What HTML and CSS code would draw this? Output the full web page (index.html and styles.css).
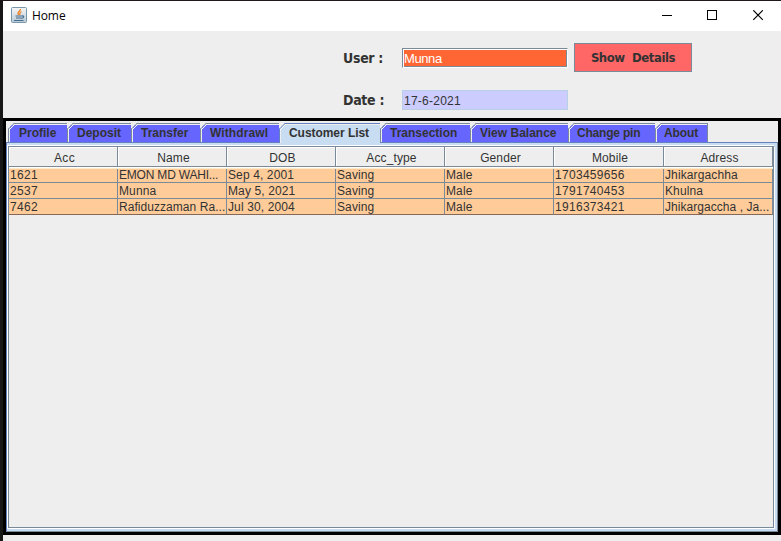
FILE: index.html
```html
<!DOCTYPE html>
<html lang="en">
<head>
<meta charset="utf-8">
<title>Home</title>
<link rel="stylesheet" href="styles.css">
</head>
<body>
<div class="window">
  <header class="titlebar">
    <svg class="java" width="16" height="16" viewBox="0 0 16 16">
      <defs><linearGradient id="g" x2="0" y2="1"><stop stop-color="#f6f7f8"/><stop offset="1" stop-color="#b9c9d5"/></linearGradient></defs>
      <rect x=".5" y=".5" width="15" height="15" rx="1" fill="url(#g)" stroke="#7897ab"/>
      <path d="M9.500 2C10 4 5.500 4.500 7.500 8M10.500 4.500C8 5.500 9.500 6.500 8.500 8" fill="none" stroke="#ee8423" stroke-width="1.300"/>
      <path d="M4.500 9h6.500M5 11h5.500M11 9c2.500-.5 2 2-.5 2.500M3 13.500h9.500" fill="none" stroke="#426d8e" stroke-width="1.200"/>
    </svg>
    <span class="title">Home</span>
    <svg class="controls" width="104" height="12" viewBox="0 0 104 12" fill="none" stroke="#000">
      <path d="M0 5.500h10M45.500 .5h9v9h-9z" shape-rendering="crispEdges"/>
      <path d="M91.300 .300l9.500 9.500M100.800 .300l-9.500 9.500" stroke-width="1.150"/>
    </svg>
  </header>
  <section class="account">
    <label class="label user">User :</label>
    <div class="field name">Munna</div>
    <button class="details">Show&nbsp; Details</button>
    <label class="label date">Date :</label>
    <div class="field day">17-6-2021</div>
  </section>
  <main class="pane">
    <nav class="tabs">
      <div class="tab profile"><svg class="corner" width="7" height="7"><path class="back" d="M0 0h6L0 6z"/><path class="edge" d="M0 6.500L6.500 0"/><path class="shine" d="M1 7L7 1"/></svg><span>Profile</span></div>
      <div class="tab deposit"><svg class="corner" width="7" height="7"><path class="back" d="M0 0h6L0 6z"/><path class="edge" d="M0 6.500L6.500 0"/><path class="shine" d="M1 7L7 1"/></svg><span>Deposit</span></div>
      <div class="tab transfer"><svg class="corner" width="7" height="7"><path class="back" d="M0 0h6L0 6z"/><path class="edge" d="M0 6.500L6.500 0"/><path class="shine" d="M1 7L7 1"/></svg><span>Transfer</span></div>
      <div class="tab withdraw"><svg class="corner" width="7" height="7"><path class="back" d="M0 0h6L0 6z"/><path class="edge" d="M0 6.500L6.500 0"/><path class="shine" d="M1 7L7 1"/></svg><span>Withdrawl</span></div>
      <div class="tab customers active"><svg class="corner" width="7" height="7"><path class="back" d="M0 0h6L0 6z"/><path class="edge" d="M0 6.500L6.500 0"/><path class="shine" d="M1 7L7 1"/></svg><span>Customer List</span></div>
      <div class="tab transection"><svg class="corner" width="7" height="7"><path class="back" d="M0 0h6L0 6z"/><path class="edge" d="M0 6.500L6.500 0"/><path class="shine" d="M1 7L7 1"/></svg><span>Transection</span></div>
      <div class="tab balance"><svg class="corner" width="7" height="7"><path class="back" d="M0 0h6L0 6z"/><path class="edge" d="M0 6.500L6.500 0"/><path class="shine" d="M1 7L7 1"/></svg><span>View Balance</span></div>
      <div class="tab pin"><svg class="corner" width="7" height="7"><path class="back" d="M0 0h6L0 6z"/><path class="edge" d="M0 6.500L6.500 0"/><path class="shine" d="M1 7L7 1"/></svg><span>Change pin</span></div>
      <div class="tab about"><svg class="corner" width="7" height="7"><path class="back" d="M0 0h6L0 6z"/><path class="edge" d="M0 6.500L6.500 0"/><path class="shine" d="M1 7L7 1"/></svg><span>About</span></div>
    </nav>
    <div class="content">
      <div class="scroll">
        <div class="row head"><div>Acc</div><div>Name</div><div>DOB</div><div>Acc_type</div><div>Gender</div><div>Mobile</div><div>Adress</div></div>
        <div class="row first"><div>1621</div><div class="tighter">EMON MD WAHI...</div><div>Sep 4, 2001</div><div>Saving</div><div>Male</div><div class="wide">1703459656</div><div>Jhikargachha</div></div>
        <div class="row"><div>2537</div><div>Munna</div><div>May 5, 2021</div><div>Saving</div><div>Male</div><div class="wide">1791740453</div><div>Khulna</div></div>
        <div class="row last"><div>7462</div><div class="tight">Rafiduzzaman Ra...</div><div>Jul 30, 2004</div><div>Saving</div><div>Male</div><div class="wide">1916373421</div><div class="tight">Jhikargaccha , Ja...</div></div>
      </div>
    </div>
  </main>
</div>
</body>
</html>
```
FILE: styles.css
```css
* { box-sizing: border-box; }
body { margin: 0; overflow: hidden; background: #eee; color: #333; font: 12px "Liberation Sans", Arial, sans-serif; }
.window { width: 781px; height: 541px; border-left: 3px solid #171717; border-top: 1px solid #21171c; }
.titlebar { display: flex; height: 30px; background: #fff; padding: 6px 15px 0 8px; }
.java { flex: none; }
.title { margin-left: 5px; font: 12px/18px "Open Sans", sans-serif; color: #000; letter-spacing: -.1px; }
.controls { margin: 3px 0 0 auto; }
.account { height: 87px; display: grid; grid-template-columns: 59px 172px 118px; grid-template-rows: 42px 42px; padding-left: 340px; }
.label { font: bold 14px/20px "DejaVu Sans Condensed", "DejaVu Sans", sans-serif; font-stretch: condensed; letter-spacing: -.3px; white-space: nowrap; margin-top: 17px; }
.field { width: 166px; height: 20px; margin-top: 17px; padding-left: 1px; font-size: 13px; line-height: 19px; letter-spacing: -.4px; white-space: nowrap; }
.name { border: 1px solid #7a8a99; border-right-color: #fff; border-bottom-color: #fff; background: #f63; color: #fff; box-shadow: inset 1px 1px #fff, inset -1px -1px #7a8a99; }
.day { background: #ccf; border: 1px solid #b8cfe5; line-height: 20px; font-size: 12px; letter-spacing: .25px; }
.details { width: 118px; height: 29px; margin: 12px 0 0; padding: 0; border: 1px solid #7a8a99; background: #f66; color: #333; font: bold 13px/27px "DejaVu Sans Condensed", "DejaVu Sans", sans-serif; font-stretch: condensed; letter-spacing: -.43px; white-space: nowrap; }
.pane { height: 417px; border: 3px solid #000; padding-top: 2px; display: flex; flex-direction: column; }
.tabs { display: flex; height: 19px; padding-left: 2px; }
.tab { position: relative; height: 19px; border-top: 1px solid #7a8a99; border-left: 1px solid #7a8a99; background: #66f; box-shadow: inset 1px 1px #eee; padding-left: 10px; font-weight: bold; line-height: 18px; white-space: nowrap; }
.corner { position: absolute; left: -1px; top: -1px; }
.back { fill: #eee; } .edge { fill: none; stroke: #7a8a99; } .shine { fill: none; stroke: #fff; }
.profile { width: 59px; } .deposit { width: 64px; padding-left: 9px; } .transfer { width: 69px; } .withdraw { width: 79px; }
.customers { width: 101px; } .transection { width: 90px; } .balance { width: 98px; } .pin { width: 87px; }
.about { width: 53px; border-right: 1px solid #7a8a99; }
.transfer, .withdraw, .customers, .transection { padding-left: 9px; }
.withdraw { letter-spacing: .1px; }
.balance { padding-left: 9px; }
.pin { padding-left: 8px; letter-spacing: -.2px; } .about { padding-left: 8px; letter-spacing: -.1px; }
.active { background: #c8ddf2; height: 20px; z-index: 1; border-color: #6382bf; letter-spacing: -.05px; }
.active .edge { stroke: #6382bf; }
.content { flex: 1; background: #fff; border: 1px solid #6382bf; border-right-color: #7a8a99; border-bottom-color: #7a8a99; padding: 3px 4px 3px 1px; box-shadow: inset 0 2px #c8ddf2, inset -3px -2px #c8ddf2; }
.scroll { height: 382px; width: 766px; border: 1px solid #7a8a99; background: #eee; box-shadow: 1px 1px #fff; }
.row { display: grid; grid-template-columns: 109px 109px 109px 109px 109px 110px 109px; height: 16px; background: #fc9; line-height: 16px; letter-spacing: .12px; }
.row > div { border-right: 1px solid #7a8a99; border-bottom: 1px solid #7a8a99; padding-left: 1px; white-space: nowrap; overflow: hidden; }
.row > div:first-child { letter-spacing: .3px; }
.head { height: 21px; background: #eee; line-height: 22px; text-align: center; border-bottom: 1px solid #fff; }
.head > div { box-shadow: inset 1px 1px #fff; }
.head > div:nth-child(n) { padding-left: 3px; }
.first { height: 15px; line-height: 14px; border-top: 1px solid #ffe9cb; }
.first > div { line-height: 13px; }
.row .tight { letter-spacing: .05px; }
.row .tighter { letter-spacing: -.2px; }
.row .wide { letter-spacing: .3px; }
.last > div { border-bottom-color: #876857; }
```
